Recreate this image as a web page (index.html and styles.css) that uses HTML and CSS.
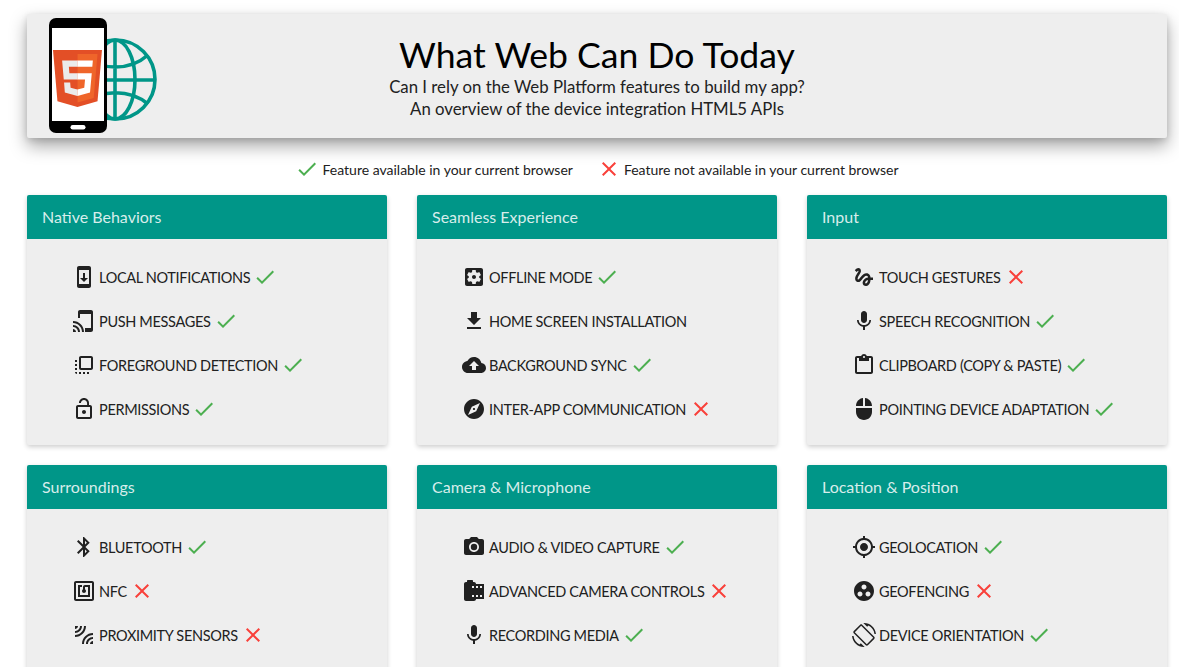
FILE: index.html
```html
<!DOCTYPE html>
<html lang="en">
<head>
<meta charset="utf-8">
<title>What Web Can Do Today</title>
<link rel="stylesheet" href="styles.css">
</head>
<body>
<svg class="sprite" width="0" height="0" aria-hidden="true">
  <defs>
    <symbol id="i-check" viewBox="0 0 24 24"><path d="M9 16.17L4.83 12l-1.42 1.41L9 19 21 7l-1.41-1.41z"/></symbol>
    <symbol id="i-close" viewBox="0 0 24 24"><path d="M19 6.41L17.59 5 12 10.59 6.41 5 5 6.41 10.59 12 5 17.59 6.41 19 12 13.41 17.59 19 19 17.59 13.41 12z"/></symbol>
    <symbol id="i-update" viewBox="0 0 24 24"><path d="M17 1.01L7 1c-1.1 0-2 .9-2 2v18c0 1.1.9 2 2 2h10c1.1 0 2-.9 2-2V3c0-1.1-.9-1.99-2-1.99zM17 19H7V5h10v14zm-1-6h-3V8h-2v5H8l4 4 4-4z"/></symbol>
    <symbol id="i-push" viewBox="0 0 24 24"><path d="M19 1H8C6.9 1 6 1.9 6 3v6h2V5h11v14h-6v4h6c1.1 0 2-.9 2-2V3c0-1.1-.9-2-2-2zM1 20v3h3c0-1.66-1.34-3-3-3zm0-4v2c2.76 0 5 2.24 5 5h2c0-3.87-3.13-7-7-7zm0-4v2c4.97 0 9 4.03 9 9h2c0-6.08-4.93-11-11-11z"/></symbol>
    <symbol id="i-front" viewBox="0 0 24 24"><path d="M3 13h2v-2H3v2zm0 4h2v-2H3v2zm2 4v-2H3c0 1.1.89 2 2 2zM3 9h2V7H3v2zm12 12h2v-2h-2v2zm4-18H9c-1.11 0-2 .9-2 2v10c0 1.1.89 2 2 2h10c1.1 0 2-.9 2-2V5c0-1.1-.9-2-2-2zm0 12H9V5h10v10zm-8 6h2v-2h-2v2zm-4 0h2v-2H7v2z"/></symbol>
    <symbol id="i-lock" viewBox="0 0 24 24"><path d="M12 17c1.1 0 2-.9 2-2s-.9-2-2-2-2 .9-2 2 .9 2 2 2zm6-9h-1V6c0-2.76-2.24-5-5-5S7 3.24 7 6h1.9c0-1.71 1.39-3.1 3.1-3.1 1.71 0 3.1 1.39 3.1 3.1v2H6c-1.1 0-2 .9-2 2v10c0 1.1.9 2 2 2h12c1.1 0 2-.9 2-2V10c0-1.1-.9-2-2-2zm0 12H6V10h12v10z"/></symbol>
    <symbol id="i-settings" viewBox="0 0 24 24"><path d="M12 10c-1.1 0-2 .9-2 2s.9 2 2 2 2-.9 2-2-.9-2-2-2zm7-7H5c-1.11 0-2 .9-2 2v14c0 1.1.89 2 2 2h14c1.11 0 2-.9 2-2V5c0-1.1-.89-2-2-2zm-1.75 9c0 .23-.02.46-.05.68l1.48 1.16c.13.11.17.3.08.45l-1.4 2.42c-.09.15-.27.21-.43.15l-1.74-.7c-.36.28-.76.51-1.18.69l-.26 1.85c-.03.17-.18.3-.35.3h-2.8c-.17 0-.32-.13-.35-.29l-.26-1.85c-.43-.18-.82-.41-1.18-.69l-1.74.7c-.16.06-.34 0-.43-.15l-1.4-2.42c-.09-.15-.05-.34.08-.45l1.48-1.16c-.03-.23-.05-.46-.05-.69 0-.23.02-.46.05-.68l-1.48-1.16c-.13-.11-.17-.3-.08-.45l1.4-2.42c.09-.15.27-.21.43-.15l1.74.7c.36-.28.76-.51 1.18-.69l.26-1.85c.03-.17.18-.3.35-.3h2.8c.17 0 .32.13.35.29l.26 1.85c.43.18.82.41 1.18.69l1.74-.7c.16-.06.34 0 .43.15l1.4 2.42c.09.15.05.34-.08.45l-1.48 1.16c.03.23.05.46.05.69z"/></symbol>
    <symbol id="i-download" viewBox="0 0 24 24"><path d="M19 9h-4V3H9v6H5l7 7 7-7zM5 18v2h14v-2H5z"/></symbol>
    <symbol id="i-cloud" viewBox="0 0 24 24"><path d="M19.35 10.04C18.67 6.59 15.64 4 12 4 9.11 4 6.6 5.64 5.35 8.04 2.34 8.36 0 10.91 0 14c0 3.31 2.69 6 6 6h13c2.76 0 5-2.24 5-5 0-2.64-2.05-4.78-4.65-4.96zM14 13v4h-4v-4H7l5-5 5 5h-3z"/></symbol>
    <symbol id="i-explore" viewBox="0 0 24 24"><path d="M12 10.9c-.61 0-1.1.49-1.1 1.1s.49 1.1 1.1 1.1c.61 0 1.1-.49 1.1-1.1s-.49-1.1-1.1-1.1zM12 2C6.48 2 2 6.48 2 12s4.48 10 10 10 10-4.48 10-10S17.52 2 12 2zm2.19 12.19L6 18l3.81-8.19L18 6l-3.81 8.19z"/></symbol>
    <symbol id="i-gesture" viewBox="0 0 24 24"><path d="M4.59 6.89c.7-.71 1.4-1.35 1.71-1.22.5.2 0 1.03-.3 1.52-.25.42-2.86 3.89-2.86 6.31 0 1.28.48 2.34 1.34 2.98.75.56 1.74.73 2.64.46 1.07-.31 1.95-1.4 3.06-2.77 1.21-1.49 2.83-3.44 4.08-3.44 1.63 0 1.65 1.01 1.76 1.79-3.78.64-5.38 3.67-5.38 5.37 0 1.7 1.44 3.09 3.21 3.09 1.63 0 4.29-1.33 4.69-6.1H21v-2.5h-2.47c-.15-1.65-1.09-4.2-4.03-4.2-2.25 0-4.18 1.91-4.94 2.84-.58.73-2.06 2.48-2.29 2.72-.25.3-.68.84-1.11.84-.45 0-.72-.83-.36-1.92.35-1.09 1.4-2.86 1.85-3.52.78-1.14 1.3-1.92 1.3-3.28C8.95 3.69 7.31 3 6.44 3 5.12 3 3.97 4 3.72 4.25c-.36.36-.66.66-.88.93l1.75 1.71zm9.29 11.66c-.31 0-.74-.26-.74-.72 0-.6.73-2.2 2.87-2.76-.3 2.69-1.43 3.48-2.13 3.48z"/></symbol>
    <symbol id="i-mic" viewBox="0 0 24 24"><path d="M12 14c1.66 0 2.99-1.34 2.99-3L15 5c0-1.66-1.34-3-3-3S9 3.34 9 5v6c0 1.66 1.34 3 3 3zm5.3-3c0 3-2.54 5.1-5.3 5.1S6.7 14 6.7 11H5c0 3.41 2.72 6.23 6 6.72V21h2v-3.28c3.28-.48 6-3.3 6-6.72h-1.7z"/></symbol>
    <symbol id="i-paste" viewBox="0 0 24 24"><path d="M19 3h-4.18C14.4 1.84 13.3 1 12 1c-1.3 0-2.4.84-2.82 2H5c-1.1 0-2 .9-2 2v14c0 1.1.9 2 2 2h14c1.1 0 2-.9 2-2V5c0-1.1-.9-2-2-2zm-7 0c.55 0 1 .45 1 1s-.45 1-1 1-1-.45-1-1 .45-1 1-1zm7 16H5V5h2v3h10V5h2v14z"/></symbol>
    <symbol id="i-mouse" viewBox="0 0 24 24"><path d="M13 1.07V9h7c0-4.08-3.05-7.44-7-7.93zM4 15c0 4.42 3.58 8 8 8s8-3.58 8-8v-4H4v4zm7-13.93C7.05 1.56 4 4.92 4 9h7V1.07z"/></symbol>
    <symbol id="i-bluetooth" viewBox="0 0 24 24"><path d="M17.71 7.71L12 2h-1v7.59L6.41 5 5 6.41 10.59 12 5 17.59 6.41 19 11 14.41V22h1l5.71-5.71-4.3-4.29 4.3-4.29zM13 5.83l1.88 1.88L13 9.59V5.83zm1.88 10.46L13 18.17v-3.76l1.88 1.88z"/></symbol>
    <symbol id="i-nfc" viewBox="0 0 24 24"><path d="M20 2H4c-1.1 0-2 .9-2 2v16c0 1.1.9 2 2 2h16c1.1 0 2-.9 2-2V4c0-1.1-.9-2-2-2zm0 18H4V4h16v16zM18 6h-5c-1.1 0-2 .9-2 2v2.28c-.6.35-1 .98-1 1.72 0 1.1.9 2 2 2s2-.9 2-2c0-.74-.4-1.38-1-1.72V8h3v8H8V8h2V6H6v12h12V6z"/></symbol>
    <symbol id="i-leak" viewBox="0 0 24 24"><path d="M6 3H3v3c1.66 0 3-1.34 3-3zm8 0h-2c0 4.97-4.03 9-9 9v2c6.08 0 11-4.93 11-11zm-4 0H8c0 2.76-2.24 5-5 5v2c3.87 0 7-3.13 7-7zm0 18h2c0-4.97 4.03-9 9-9v-2c-6.07 0-11 4.93-11 11zm8 0h3v-3c-1.66 0-3 1.34-3 3zm-4 0h2c0-2.76 2.24-5 5-5v-2c-3.87 0-7 3.13-7 7z"/></symbol>
    <symbol id="i-camera" viewBox="0 0 24 24"><circle cx="12" cy="12" r="3.2"/><path d="M9 2L7.17 4H4c-1.1 0-2 .9-2 2v12c0 1.1.9 2 2 2h16c1.1 0 2-.9 2-2V6c0-1.1-.9-2-2-2h-3.17L15 2H9zm3 15c-2.76 0-5-2.24-5-5s2.24-5 5-5 5 2.24 5 5-2.24 5-5 5z"/></symbol>
    <symbol id="i-roll" viewBox="0 0 24 24"><path d="M14 5c0-1.1-.9-2-2-2h-1V2c0-.55-.45-1-1-1H6c-.55 0-1 .45-1 1v1H4c-1.1 0-2 .9-2 2v15c0 1.1.9 2 2 2h8c1.1 0 2-.9 2-2h8V5h-8zm-2 13h-2v-2h2v2zm0-9h-2V7h2v2zm4 9h-2v-2h2v2zm0-9h-2V7h2v2zm4 9h-2v-2h2v2zm0-9h-2V7h2v2z"/></symbol>
    <symbol id="i-location" viewBox="0 0 24 24"><path d="M12 8c-2.21 0-4 1.79-4 4s1.79 4 4 4 4-1.79 4-4-1.79-4-4-4zm8.94 3c-.46-4.17-3.77-7.48-7.94-7.94V1h-2v2.06C6.83 3.52 3.52 6.83 3.06 11H1v2h2.06c.46 4.17 3.77 7.48 7.94 7.94V23h2v-2.06c4.17-.46 7.48-3.77 7.94-7.94H23v-2h-2.06zM12 19c-3.87 0-7-3.13-7-7s3.13-7 7-7 7 3.13 7 7-3.13 7-7 7z"/></symbol>
    <symbol id="i-group" viewBox="0 0 24 24"><path d="M12 2C6.48 2 2 6.48 2 12s4.48 10 10 10 10-4.48 10-10S17.52 2 12 2zM8 17.5c-1.38 0-2.5-1.12-2.5-2.5s1.12-2.5 2.5-2.5 2.5 1.12 2.5 2.5-1.12 2.5-2.5 2.5zM9.5 8c0-1.38 1.12-2.5 2.5-2.5s2.5 1.12 2.5 2.5-1.12 2.5-2.5 2.5S9.5 9.38 9.5 8zm6.5 9.5c-1.38 0-2.5-1.12-2.5-2.5s1.12-2.5 2.5-2.5 2.5 1.12 2.5 2.5-1.12 2.5-2.5 2.5z"/></symbol>
    <symbol id="i-rotate" viewBox="0 0 24 24"><path d="M16.48 2.52c3.27 1.55 5.61 4.72 5.97 8.48h1.5C23.44 4.84 18.29 0 12 0l-.66.03 3.81 3.81 1.33-1.32zm-6.25-.77c-.59-.59-1.54-.59-2.12 0L1.75 8.11c-.59.59-.59 1.54 0 2.12l12.02 12.02c.59.59 1.54.59 2.12 0l6.36-6.36c.59-.59.59-1.54 0-2.12L10.23 1.75zm4.6 19.44L2.81 9.17l6.36-6.36 12.02 12.02-6.36 6.36zm-7.31.29C4.25 19.94 1.91 16.76 1.55 13H.05C.56 19.16 5.71 24 12 24l.66-.03-3.81-3.81-1.33 1.32z"/></symbol>
  </defs>
</svg>

<header class="hero">
  <svg class="logo" width="112" height="120" viewBox="0 0 112 120" aria-hidden="true">
    <g fill="none" stroke="#009688" stroke-width="3.6">
      <circle cx="67.5" cy="63.5" r="39.5"/>
      <ellipse cx="67" cy="63.5" rx="20" ry="39.5"/>
      <path d="M67 24v79M28 64h79M35 39c18 16 47 16 65 0M35 88c18-15 47-15 65 0"/>
    </g>
    <rect x="1" y="2" width="58" height="115" rx="7" fill="#000"/>
    <rect x="4" y="12" width="52" height="93" fill="#fff"/>
    <rect x="22.5" y="109" width="15" height="4.5" rx="2.2" fill="#fff"/>
    <svg x="1.74" y="34" width="55.6" height="57" viewBox="0 0 512 512" preserveAspectRatio="none">
      <path fill="#e34f26" d="M71 460L30 0h451l-41 460-185 52z"/>
      <path fill="#ef652a" d="M256 472l149-41 35-394H256z"/>
      <path fill="#ebebeb" d="M256 208h-75l-5-58h80V94H114l15 171h127zm-1 147l-63-17-4-45h-56l7 89 116 32h1z"/>
      <path fill="#fff" d="M255 208v57h70l-7 73-63 17v59l116-32 16-174zm0-114v56h137l5-56z"/>
    </svg>
  </svg>
  <div class="hero-text">
    <h1 class="hero-title">What Web Can Do Today</h1>
    <p class="hero-sub">Can I rely on the Web Platform features to build my app?</p>
    <p class="hero-sub">An overview of the device integration HTML5 APIs</p>
  </div>
</header>

<div class="legend">
  <span class="legend-item"><svg class="ico ok"><use href="#i-check"/></svg>Feature available in your current browser</span>
  <span class="legend-item"><svg class="ico no"><use href="#i-close"/></svg>Feature not available in your current browser</span>
</div>

<main class="cards">
  <section class="card">
    <h2 class="card-title">Native Behaviors</h2>
    <ul class="features">
      <li class="feature"><svg class="ico"><use href="#i-update"/></svg><span class="feature-name">LOCAL NOTIFICATIONS</span><svg class="ico ok"><use href="#i-check"/></svg></li>
      <li class="feature"><svg class="ico"><use href="#i-push"/></svg><span class="feature-name">PUSH MESSAGES</span><svg class="ico ok"><use href="#i-check"/></svg></li>
      <li class="feature"><svg class="ico"><use href="#i-front"/></svg><span class="feature-name">FOREGROUND DETECTION</span><svg class="ico ok"><use href="#i-check"/></svg></li>
      <li class="feature"><svg class="ico"><use href="#i-lock"/></svg><span class="feature-name">PERMISSIONS</span><svg class="ico ok"><use href="#i-check"/></svg></li>
    </ul>
  </section>
  <section class="card">
    <h2 class="card-title">Seamless Experience</h2>
    <ul class="features">
      <li class="feature"><svg class="ico"><use href="#i-settings"/></svg><span class="feature-name">OFFLINE MODE</span><svg class="ico ok"><use href="#i-check"/></svg></li>
      <li class="feature"><svg class="ico"><use href="#i-download"/></svg><span class="feature-name">HOME SCREEN INSTALLATION</span></li>
      <li class="feature"><svg class="ico"><use href="#i-cloud"/></svg><span class="feature-name">BACKGROUND SYNC</span><svg class="ico ok"><use href="#i-check"/></svg></li>
      <li class="feature"><svg class="ico"><use href="#i-explore"/></svg><span class="feature-name">INTER-APP COMMUNICATION</span><svg class="ico no"><use href="#i-close"/></svg></li>
    </ul>
  </section>
  <section class="card">
    <h2 class="card-title">Input</h2>
    <ul class="features">
      <li class="feature"><svg class="ico"><use href="#i-gesture"/></svg><span class="feature-name">TOUCH GESTURES</span><svg class="ico no"><use href="#i-close"/></svg></li>
      <li class="feature"><svg class="ico"><use href="#i-mic"/></svg><span class="feature-name">SPEECH RECOGNITION</span><svg class="ico ok"><use href="#i-check"/></svg></li>
      <li class="feature"><svg class="ico"><use href="#i-paste"/></svg><span class="feature-name">CLIPBOARD (COPY &amp; PASTE)</span><svg class="ico ok"><use href="#i-check"/></svg></li>
      <li class="feature"><svg class="ico"><use href="#i-mouse"/></svg><span class="feature-name">POINTING DEVICE ADAPTATION</span><svg class="ico ok"><use href="#i-check"/></svg></li>
    </ul>
  </section>
  <section class="card">
    <h2 class="card-title">Surroundings</h2>
    <ul class="features">
      <li class="feature"><svg class="ico"><use href="#i-bluetooth"/></svg><span class="feature-name">BLUETOOTH</span><svg class="ico ok"><use href="#i-check"/></svg></li>
      <li class="feature"><svg class="ico"><use href="#i-nfc"/></svg><span class="feature-name">NFC</span><svg class="ico no"><use href="#i-close"/></svg></li>
      <li class="feature"><svg class="ico"><use href="#i-leak"/></svg><span class="feature-name">PROXIMITY SENSORS</span><svg class="ico no"><use href="#i-close"/></svg></li>
    </ul>
  </section>
  <section class="card">
    <h2 class="card-title">Camera &amp; Microphone</h2>
    <ul class="features">
      <li class="feature"><svg class="ico"><use href="#i-camera"/></svg><span class="feature-name">AUDIO &amp; VIDEO CAPTURE</span><svg class="ico ok"><use href="#i-check"/></svg></li>
      <li class="feature"><svg class="ico"><use href="#i-roll"/></svg><span class="feature-name">ADVANCED CAMERA CONTROLS</span><svg class="ico no"><use href="#i-close"/></svg></li>
      <li class="feature"><svg class="ico"><use href="#i-mic"/></svg><span class="feature-name">RECORDING MEDIA</span><svg class="ico ok"><use href="#i-check"/></svg></li>
    </ul>
  </section>
  <section class="card">
    <h2 class="card-title">Location &amp; Position</h2>
    <ul class="features">
      <li class="feature"><svg class="ico"><use href="#i-location"/></svg><span class="feature-name">GEOLOCATION</span><svg class="ico ok"><use href="#i-check"/></svg></li>
      <li class="feature"><svg class="ico"><use href="#i-group"/></svg><span class="feature-name">GEOFENCING</span><svg class="ico no"><use href="#i-close"/></svg></li>
      <li class="feature"><svg class="ico"><use href="#i-rotate"/></svg><span class="feature-name">DEVICE ORIENTATION</span><svg class="ico ok"><use href="#i-check"/></svg></li>
    </ul>
  </section>
</main>
</body>
</html>
```

FILE: styles.css
```css
* { box-sizing: border-box; }
html, body { margin: 0; padding: 0; }
body {
  padding: 14px 12px 0 27px;
  background: #fff;
  color: #212121;
  font-family: Lato, "Liberation Sans", sans-serif;
}
.sprite { position: absolute; }

.hero {
  display: grid;
  grid-template-columns: 1fr auto 1fr;
  height: 124px;
  padding-top: 2px;
  background: #eee;
  border-radius: 2px;
  box-shadow: 0 8px 17px rgba(0,0,0,.35), 0 2px 6px rgba(0,0,0,.12);
}
.logo { margin-left: 21px; display: block; }
.hero-text { text-align: center; padding-top: 17px; color: #212121; }
.hero-title { margin: 0; font-size: 35.6px; font-weight: 400; line-height: 43px; color: #000; }
.hero-sub { margin: 0; font-size: 16.8px; line-height: 22px; }

.legend {
  display: flex;
  justify-content: center;
  gap: 24px;
  margin: 19px 0 14px;
  font-size: 14px;
  height: 24px;
}
.legend-item { display: flex; align-items: center; gap: 3px; }

.ico { width: 24px; height: 24px; flex: none; fill: #212121; }
.ok { fill: #4caf50; }
.no { fill: #f9403a; }

.cards {
  display: grid;
  grid-template-columns: repeat(3, 360px);
  gap: 20px 30px;
}
.card {
  background: #eee;
  border-radius: 2px;
  box-shadow: 0 2px 5px rgba(0,0,0,.2);
}
.card-title {
  margin: 0;
  height: 44px;
  padding-left: 15px;
  background: #009688;
  border-radius: 2px 2px 0 0;
  color: rgba(255,255,255,.85);
  font-size: 16px;
  font-weight: 400;
  line-height: 44px;
}
.features { list-style: none; margin: 0; padding: 16px 0 14px 45px; }
.feature {
  display: flex;
  align-items: center;
  gap: 3px;
  height: 44px;
  font-size: 14.5px;
  letter-spacing: -.33px;
}
```
